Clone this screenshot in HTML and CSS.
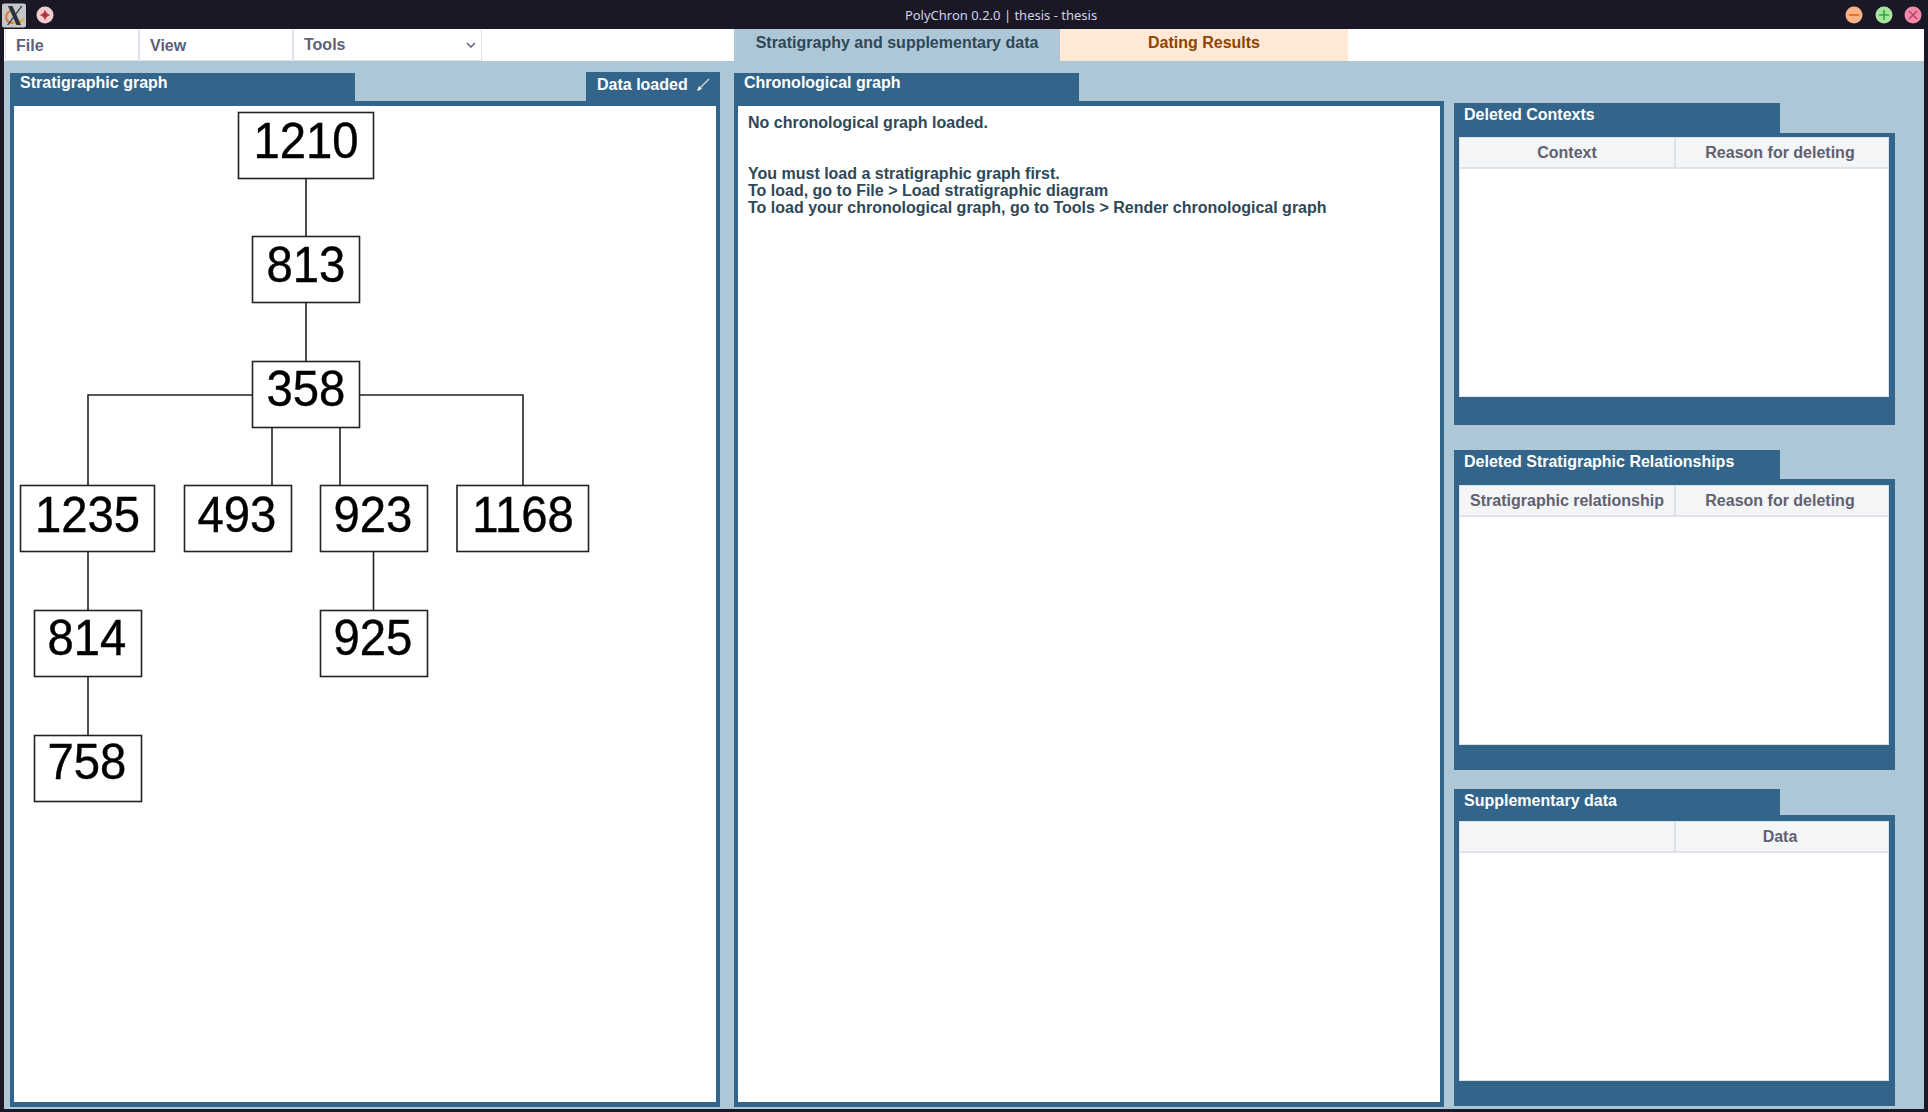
FILE: index.html
```html
<!DOCTYPE html>
<html lang="en">
<head>
    <meta charset="UTF-8">
    <meta name="viewport" content="width=device-width, initial-scale=1.0">
    <title>PolyChron</title>
    <link rel="stylesheet" href="styles.css">
</head>
<body>

<div class="titlebar">
    <div class="title-left">
        <svg class="x-icon" width="26" height="26" viewBox="0 0 26 26">
            <rect x="1" y="1.5" width="24" height="24" rx="2" fill="#c3c7c9"/>
            <path d="M9 9C3 13 4 21 12 21c4 0 8-1 11-4" fill="none" stroke="#e8742a" stroke-width="2"/>
            <path d="M12 21c4 0 8-1 11-4" fill="none" stroke="#e9b04a" stroke-width="2"/>
            <path d="M7 4h4.500l8.500 19h-4.500z" fill="#2e3138"/>
            <path d="M20 4h1.500l-14 19h-1.500z" fill="#2e3138"/>
        </svg>
        <svg class="pin-icon" width="18" height="18" viewBox="0 0 18 18">
            <circle cx="9" cy="9" r="8.500" fill="#f2cdcd"/>
            <path d="M9 4.500v9M4.500 9h9" stroke="#b3303f" stroke-width="1.600"/>
            <circle cx="9" cy="9" r="2.800" fill="#b3303f"/>
        </svg>
    </div>
    <div class="title-text">PolyChron 0.2.0 | thesis - thesis</div>
    <div class="title-buttons">
        <svg width="18" height="18" viewBox="0 0 18 18">
            <circle cx="9" cy="9" r="8.500" fill="#fab387"/>
            <path d="M4 9h10" stroke="#e2640f" stroke-width="1.600"/>
        </svg>
        <svg width="18" height="18" viewBox="0 0 18 18">
            <circle cx="9" cy="9" r="8.500" fill="#a6e3a1"/>
            <path d="M4 9h10M9 4v10" stroke="#2fa83a" stroke-width="1.600"/>
        </svg>
        <svg width="18" height="18" viewBox="0 0 18 18">
            <circle cx="9" cy="9" r="8.500" fill="#f38ba8"/>
            <path d="M5 5l8 8M13 5l-8 8" stroke="#b5456a" stroke-width="1.600"/>
        </svg>
    </div>
</div>

<div class="window">
    <div class="toolbar">
        <div class="menu menu-file">File</div>
        <div class="menu menu-view">View</div>
        <div class="menu menu-tools">
            Tools
            <svg class="chevron" width="10" height="6" viewBox="0 0 10 6">
                <path d="M1 1l4 4 4-4" fill="none" stroke="#5c5f77" stroke-width="1.500"/>
            </svg>
        </div>
        <div class="page-tab page-tab-active">Stratigraphy and supplementary data</div>
        <div class="page-tab page-tab-dating">Dating Results</div>
    </div>

    <div class="main">
        <section class="panel">
            <div class="panel-head">
                <div class="panel-tab">Stratigraphic graph</div>
                <div class="loaded-tab">
                    Data loaded
                    <svg width="14" height="14" viewBox="0 0 14 14">
                        <path d="M1 13l2-5 3 3z" fill="#fff"/>
                        <path d="M4 10l9-9" stroke="#cfdde8" stroke-width="1.300"/>
                    </svg>
                </div>
            </div>
            <div class="panel-body">
                <svg class="graph" width="702" height="996" viewBox="14 106 702 996">
                    <g class="edges">
                        <path d="M306 179V236M306 303V361"/>
                        <path d="M252 395H88V485M360 395H523V485"/>
                        <path d="M272 428V485M340 428V485"/>
                        <path d="M88 552V610M88 677V735M373.500 552V610"/>
                    </g>
                    <g class="node"><rect x="238.500" y="112.500" width="135" height="66"/><text x="306" y="158">1210</text></g>
                    <g class="node"><rect x="252.500" y="236.500" width="107" height="66"/><text x="306" y="282">813</text></g>
                    <g class="node"><rect x="252.500" y="361.500" width="107" height="66"/><text x="306" y="406">358</text></g>
                    <g class="node"><rect x="20.500" y="485.500" width="134" height="66"/><text x="87.500" y="532">1235</text></g>
                    <g class="node"><rect x="184.500" y="485.500" width="107" height="66"/><text x="237" y="532">493</text></g>
                    <g class="node"><rect x="320.500" y="485.500" width="107" height="66"/><text x="373" y="532">923</text></g>
                    <g class="node"><rect x="457" y="485.500" width="131.500" height="66"/><text x="523" y="532">1168</text></g>
                    <g class="node"><rect x="34.500" y="610.500" width="107" height="66"/><text x="87" y="655">814</text></g>
                    <g class="node"><rect x="320.500" y="610.500" width="107" height="66"/><text x="373" y="655">925</text></g>
                    <g class="node"><rect x="34.500" y="735.500" width="107" height="66"/><text x="87" y="779">758</text></g>
                </svg>
            </div>
        </section>

        <section class="panel">
            <div class="panel-head">
                <div class="panel-tab">Chronological graph</div>
            </div>
            <div class="panel-body chrono-text">No chronological graph loaded.


You must load a stratigraphic graph first.
To load, go to File &gt; Load stratigraphic diagram
To load your chronological graph, go to Tools &gt; Render chronological graph</div>
        </section>

        <div class="side">
            <section class="side-panel side-contexts">
                <div class="side-tab">Deleted Contexts</div>
                <div class="side-body">
                    <div class="table">
                        <div class="table-head"><div>Context</div><div>Reason for deleting</div></div>
                    </div>
                </div>
            </section>
            <section class="side-panel side-relations">
                <div class="side-tab">Deleted Stratigraphic Relationships</div>
                <div class="side-body">
                    <div class="table">
                        <div class="table-head"><div>Stratigraphic relationship</div><div>Reason for deleting</div></div>
                    </div>
                </div>
            </section>
            <section class="side-panel side-supp">
                <div class="side-tab">Supplementary data</div>
                <div class="side-body">
                    <div class="table">
                        <div class="table-head"><div></div><div>Data</div></div>
                    </div>
                </div>
            </section>
        </div>
    </div>
</div>

</body>
</html>
```

FILE: styles.css
```css
* {
    box-sizing: border-box;
}
body {
    margin: 0;
    width: 1928px;
    height: 1112px;
    overflow: hidden;
    background: #1a1826;
    font-family: "Liberation Sans", Arial, sans-serif;
    font-size: 16px;
    font-weight: bold;
}

/* window title bar */
.titlebar {
    height: 29px;
    display: flex;
    align-items: center;
    justify-content: space-between;
    position: relative;
}
.title-left {
    display: flex;
    align-items: center;
    gap: 9px;
    padding-left: 1px;
}
.title-text {
    position: absolute;
    left: 0;
    right: 0;
    top: 6px;
    padding-left: 74px;
    text-align: center;
    font-family: "Noto Sans", sans-serif;
    font-size: 13px;
    font-weight: normal;
    line-height: 18px;
    color: #d0d3e8;
}
.title-buttons {
    display: flex;
    gap: 11.5px;
    padding-right: 6px;
}

.window {
    margin: 0 4px;
    height: 1080px;
}

/* menus and page tabs */
.toolbar {
    height: 32px;
    display: flex;
    background: #fff;
    color: #5c5f77;
}
.menu {
    height: 32px;
    line-height: 34px;
    padding-left: 10px;
    background: #fff;
    border: 1px solid #dce0e8;
    border-top: 0;
    border-radius: 2px;
}
.menu-file {
    width: 134px;
    margin-left: 1px;
}
.menu-view {
    width: 154px;
}
.menu-tools {
    width: 189px;
    display: flex;
    justify-content: space-between;
    align-items: center;
    padding-right: 5px;
    padding-top: 1px;
}
.page-tab {
    height: 32px;
    line-height: 28px;
    text-align: center;
}
.page-tab-active {
    width: 326px;
    margin-left: 252px;
    background: #aec7d6;
    color: #2f4858;
}
.page-tab-dating {
    width: 288px;
    background: #ffe9d6;
    color: #8f4300;
}

/* main area */
.main {
    height: 1048px;
    display: flex;
    padding: 11px 29px 2px 6px;
    background: #aec7d6;
}
.panel {
    width: 710px;
    margin-right: 14px;
    display: flex;
    flex-direction: column;
}
.panel:nth-child(2) {
    margin-right: 10px;
}
.panel-head {
    height: 29px;
    display: flex;
    justify-content: space-between;
    align-items: flex-end;
    flex: none;
}
.panel-tab {
    width: 345px;
    height: 28px;
    padding: 1px 0 0 10px;
    line-height: 18px;
    background: #33658a;
    color: #fff;
}
.loaded-tab {
    width: 134px;
    height: 29px;
    padding: 0 0 4px 11px;
    display: flex;
    align-items: center;
    gap: 8px;
    background: #33658a;
    color: #fff;
}
.panel-body {
    flex: 1;
    background: #fff;
    border: 4px solid #33658a;
    border-top-width: 5px;
    border-bottom-width: 5px;
}
.graph {
    display: block;
}
.edges path {
    fill: none;
    stroke: #222;
    stroke-width: 1.6;
}
.node rect {
    fill: #fff;
    stroke: #222;
    stroke-width: 1.6;
}
.node text {
    font-family: "Liberation Sans", Arial, sans-serif;
    font-size: 50px;
    font-weight: normal;
    text-anchor: middle;
    fill: #000;
    stroke: #000;
    stroke-width: 0.4;
    transform-box: fill-box;
    transform-origin: center;
    transform: scaleX(0.945);
}
.chrono-text {
    padding: 8px 0 0 10px;
    white-space: pre-wrap;
    line-height: 17px;
    color: #2f4858;
}

/* right column */
.side {
    width: 441px;
    padding-top: 31px;
    flex: none;
}
.side-tab {
    width: 326px;
    padding-left: 10px;
    background: #33658a;
    color: #fff;
}
.side-body {
    background: #33658a;
    padding: 4px 6px 28px 5px;
}
.side-contexts .side-tab {
    height: 30px;
    line-height: 24px;
}
.side-relations {
    margin-top: 25px;
}
.side-relations .side-tab {
    height: 29px;
    line-height: 24px;
}
.side-relations .side-body,
.side-supp .side-body {
    padding-top: 6px;
    padding-bottom: 25px;
}
.side-supp {
    margin-top: 19px;
}
.side-supp .side-tab {
    height: 26px;
    line-height: 24px;
}
.table {
    height: 260px;
    background: #fff;
    border: 1px solid #dce0e8;
}
.table-head {
    height: 31px;
    display: grid;
    grid-template-columns: 1fr 1fr;
    background: #f4f5f7;
    border-bottom: 2px solid #dfe3e9;
    color: #5f6170;
    text-align: center;
    line-height: 29px;
}
.table-head div + div {
    border-left: 2px solid #dfe3e9;
    padding-right: 4px;
}
```
